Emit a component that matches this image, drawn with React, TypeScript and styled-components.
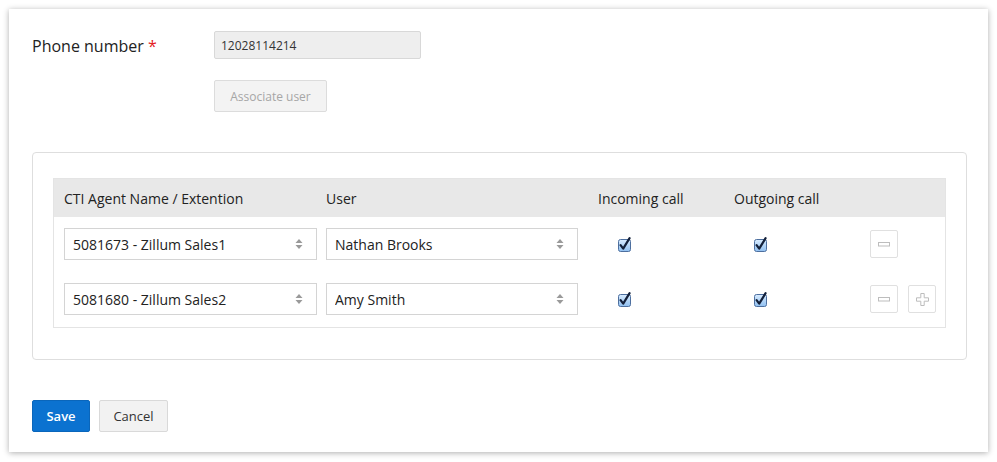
import styled, { createGlobalStyle } from 'styled-components'

const GlobalStyle = createGlobalStyle`
  html, body {
    margin: 0;
    padding: 0;
    background: #ffffff;
    font-family: "Open Sans", "Liberation Sans", sans-serif;
    color: #222;
  }
`

const Page = styled.div`
  padding: 9px;
  width: 997px;
  box-sizing: border-box;
`

const Card = styled.div`
  background: #fff;
  box-shadow: 0 1px 6px rgba(0, 0, 0, 0.32);
  padding: 22px 22px 21px 23px;
  box-sizing: border-box;
  height: 443px;
  width: 979px;
`

const FormRow = styled.div`
  display: flex;
  align-items: center;
`

const Label = styled.div`
  width: 182px;
  font-size: 16px;
  color: #222;
  padding-top: 2px;
  & > span {
    color: #e4201c;
  }
`

const ReadonlyInput = styled.input`
  width: 207px;
  height: 28px;
  box-sizing: border-box;
  background: #eeeeee;
  border: 1px solid #d8d8d8;
  border-radius: 2px;
  font-family: inherit;
  font-size: 12px;
  color: #333;
  padding: 0 6px;
  outline: none;
`

const ActionRow = styled.div`
  padding-left: 182px;
  margin-top: 21px;
`

const GhostButton = styled.button`
  height: 32px;
  width: 113px;
  background: #f3f3f3;
  border: 1px solid #dcdcdc;
  border-radius: 2px;
  font-family: inherit;
  font-size: 12px;
  color: #a6a6a6;
  padding: 0;
`

const Panel = styled.div`
  margin-top: 40px;
  border: 1px solid #dedede;
  border-radius: 4px;
  padding: 25px 20px 31px 20px;
  width: 935px;
  box-sizing: border-box;
`

const Table = styled.div`
  border: 1px solid #e4e4e4;
`

const Grid = styled.div<{ $head?: boolean }>`
  display: grid;
  grid-template-columns: 262px 272px 136px 136px 1fr;
  align-items: center;
  padding: ${p => (p.$head ? '0 0 0 10px' : '11px 0 12px 10px')};
  height: ${p => (p.$head ? '38px' : 'auto')};
  background: ${p => (p.$head ? '#e8e8e8' : '#fff')};
  font-size: 14px;
  color: #222;
`

const HeadCell = styled.div`
  font-size: 14px;
`

const SelectWrap = styled.div<{ $w: number }>`
  position: relative;
  width: ${p => p.$w}px;
`

const Select = styled.select`
  appearance: none;
  -webkit-appearance: none;
  display: block;
  width: 100%;
  height: 32px;
  border: 1px solid #d4d4d4;
  border-radius: 0;
  background: #fff;
  font-family: inherit;
  font-size: 14px;
  color: #222;
  padding: 0 24px 0 8px;
  outline: none;
`

const Arrows = styled.svg`
  position: absolute;
  right: 14px;
  top: 10px;
  pointer-events: none;
`

const CheckCell = styled.div`
  padding-left: 20px;
  display: flex;
  align-items: center;
`

const Tools = styled.div`
  display: flex;
  gap: 10px;
`

const IconButton = styled.button`
  width: 28px;
  height: 28px;
  padding: 0;
  border: 1px solid #e0e0e0;
  border-radius: 2px;
  background: #fff;
  display: flex;
  align-items: center;
  justify-content: center;
`

const Footer = styled.div`
  margin-top: 40px;
  display: flex;
  gap: 9px;
`

const PrimaryButton = styled.button`
  height: 32px;
  width: 58px;
  background: #0b72d0;
  border: 1px solid #0a66bb;
  border-radius: 2px;
  color: #fff;
  font-family: inherit;
  font-weight: 600;
  font-size: 13px;
  padding: 0;
`

const SecondaryButton = styled.button`
  height: 32px;
  width: 69px;
  background: #f2f2f2;
  border: 1px solid #d9d9d9;
  border-radius: 2px;
  color: #333;
  font-family: inherit;
  font-size: 13px;
  padding: 0;
`

const SelectArrows = () => (
  <Arrows width="8" height="12" viewBox="0 0 8 12">
    <path d="M4 1 L7.5 5 L0.5 5 Z" fill="#9a9a9a" />
    <path d="M4 11 L7.5 7 L0.5 7 Z" fill="#9a9a9a" />
  </Arrows>
)

const Checked = () => (
  <svg width="14" height="15" viewBox="0 0 14 15">
    <defs>
      <linearGradient id="cbg" x1="0" y1="0" x2="0" y2="1">
        <stop offset="0" stopColor="#d9ecff" />
        <stop offset="1" stopColor="#8fbff0" />
      </linearGradient>
    </defs>
    <rect x="0.5" y="2.5" width="12" height="12" rx="2" fill="url(#cbg)" stroke="#4d6f9f" />
    <path d="M2.6 8.2 L5.2 11.6 L11.6 1.2" fill="none" stroke="#13203a" strokeWidth="2.2" strokeLinecap="round" strokeLinejoin="round" />
  </svg>
)

const MinusIcon = () => (
  <svg width="12" height="5" viewBox="0 0 12 5">
    <rect x="0.5" y="0.5" width="11" height="3.5" fill="none" stroke="#bdbdbd" />
  </svg>
)

const PlusIcon = () => (
  <svg width="13" height="13" viewBox="0 0 13 13">
    <path d="M4.8 0.5 H8.2 V4.8 H12.5 V8.2 H8.2 V12.5 H4.8 V8.2 H0.5 V4.8 H4.8 Z" fill="none" stroke="#bdbdbd" />
  </svg>
)

interface Mapping {
  agent: string;
  user: string;
}

const rows: Mapping[] = [
  { agent: '5081673 - Zillum Sales1', user: 'Nathan Brooks' },
  { agent: '5081680 - Zillum Sales2', user: 'Amy Smith' },
]

const App = () => {
  return (
    <Page>
      <GlobalStyle />
      <Card>
        <FormRow>
          <Label>Phone number <span>*</span></Label>
          <ReadonlyInput readOnly value="12028114214" />
        </FormRow>
        <ActionRow>
          <GhostButton>Associate user</GhostButton>
        </ActionRow>

        <Panel>
          <Table>
            <Grid $head>
              <HeadCell>CTI Agent Name / Extention</HeadCell>
              <HeadCell>User</HeadCell>
              <HeadCell>Incoming call</HeadCell>
              <HeadCell>Outgoing call</HeadCell>
              <HeadCell />
            </Grid>
            {rows.map((r, i) => (
              <Grid key={r.agent}>
                <SelectWrap $w={253}>
                  <Select defaultValue={r.agent}>
                    <option>{r.agent}</option>
                  </Select>
                  <SelectArrows />
                </SelectWrap>
                <SelectWrap $w={252}>
                  <Select defaultValue={r.user}>
                    <option>{r.user}</option>
                  </Select>
                  <SelectArrows />
                </SelectWrap>
                <CheckCell><Checked /></CheckCell>
                <CheckCell><Checked /></CheckCell>
                <Tools>
                  <IconButton><MinusIcon /></IconButton>
                  {i === rows.length - 1 && <IconButton><PlusIcon /></IconButton>}
                </Tools>
              </Grid>
            ))}
          </Table>
        </Panel>

        <Footer>
          <PrimaryButton>Save</PrimaryButton>
          <SecondaryButton>Cancel</SecondaryButton>
        </Footer>
      </Card>
    </Page>
  )
}

export default App
